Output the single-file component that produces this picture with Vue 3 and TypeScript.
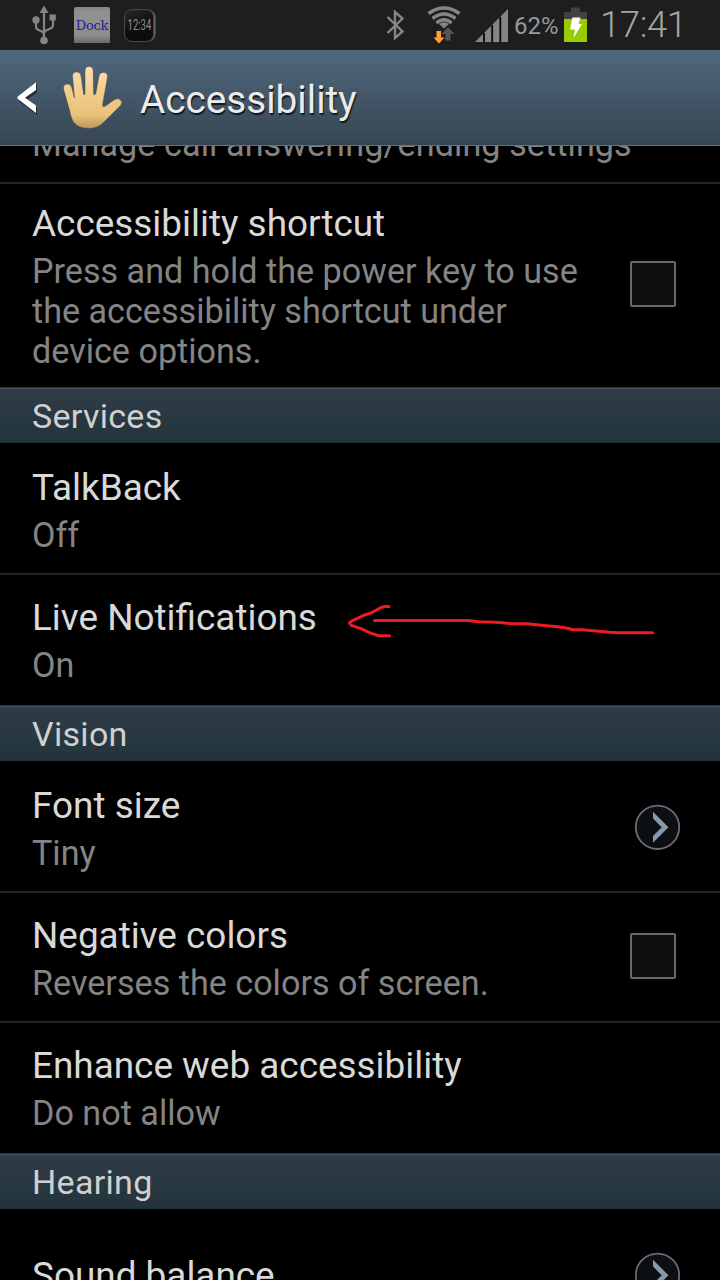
<script setup lang="ts">
interface Item {
  title: string
  summary?: string
  control?: 'check' | 'more'
  tall?: boolean
  arrow?: boolean
}
interface Section {
  heading: string
  items: Item[]
}

const sections: Section[] = [
  {
    heading: '',
    items: [
      {
        title: 'Accessibility shortcut',
        summary: 'Press and hold the power key to use\nthe accessibility shortcut under\ndevice options.',
        control: 'check',
        tall: true,
      },
    ],
  },
  {
    heading: 'Services',
    items: [
      { title: 'TalkBack', summary: 'Off' },
      { title: 'Live Notifications', summary: 'On', arrow: true },
    ],
  },
  {
    heading: 'Vision',
    items: [
      { title: 'Font size', summary: 'Tiny', control: 'more' },
      { title: 'Negative colors', summary: 'Reverses the colors of screen.', control: 'check' },
      { title: 'Enhance web accessibility', summary: 'Do not allow' },
    ],
  },
  {
    heading: 'Hearing',
    items: [{ title: 'Sound balance', control: 'more' }],
  },
]
</script>

<template>
  <div class="screen">
    <header class="status">
      <div class="notices">
        <svg class="usb" width="26" height="40" viewBox="0 0 26 40">
          <g fill="none" stroke="#858585" stroke-width="2.2">
            <path d="M13 8V34M5 15V21.5Q5 24 7.500 25L11 26.500Q13 27.500 13 31M22 13V20Q22 22.500 19.500 23.500L15 25.500Q13 26.500 13 29" />
          </g>
          <g fill="#858585">
            <path d="M13 0.500L17.500 8H8.500Z" />
            <circle cx="5" cy="15" r="3.700" />
            <rect x="18.500" y="9.500" width="6.300" height="6" />
            <circle cx="13" cy="35.500" r="3.800" />
          </g>
        </svg>
        <div class="dock">Dock</div>
        <div class="watch"><span>12:34</span></div>
      </div>
      <div class="signals">
        <svg class="bluetooth" width="20" height="32" viewBox="0 0 20 32">
          <path d="M2.500 8L17.500 22.500L10 29V3L17.500 9.500L2.500 24" fill="none" stroke="#858585" stroke-width="2.400" />
        </svg>
        <svg class="wifi" width="34" height="38" viewBox="0 0 34 38">
          <g fill="none" stroke="#858585" stroke-width="3.500">
            <path d="M1.500 7.500Q17 -3.500 32.500 7.500" />
            <path d="M5.500 12.500Q17 3.500 28.500 12.500" />
            <path d="M9.500 17Q17 10.500 24.500 17" />
          </g>
          <path d="M12 18Q17 14.500 22 18L17 22.500Z" fill="#858585" />
          <path d="M9.500 25H14V31.500H17.500L12 37.500L6.500 31.500H9.500Z" fill="#ffa135" />
          <path d="M18.500 34.500H23.500V28H27.500L21 21L14.500 28H18.500Z" fill="#555" />
        </svg>
        <svg class="cell" width="34" height="34" viewBox="0 0 34 34">
          <path d="M0 33L33 0V33Z" fill="#858585" />
          <path d="M9 24V33M17.200 16V33M25.300 8V33" stroke="#080808" stroke-width="1.800" />
        </svg>
        <span class="percent">62%</span>
        <svg class="battery" width="23" height="36" viewBox="0 0 23 36">
          <path d="M7 0.500H16V5H23V13H0V5H7Z" fill="#424242" />
          <rect y="12" width="23" height="23" fill="#99cc00" />
          <path d="M8.300 10.500H16.500L14.500 17H18L9.500 31L11 22.500H6Z" fill="#fff" />
        </svg>
        <span class="clock">17:41</span>
      </div>
    </header>

    <nav class="titlebar">
      <svg class="back" width="22" height="34" viewBox="0 0 22 34">
        <path d="M19 2.500V10.500L8.500 18L19 25.500V33L0.800 19.500V16.500Z" fill="#151d24" transform="translate(1 1)" opacity=".7" />
        <path d="M19 1.300V9L8 16.800L19 24.500V32L0.500 17.800V15.800Z" fill="#fff" />
      </svg>
      <svg class="hand" width="62" height="66" viewBox="0 0 62 66">
        <defs>
          <linearGradient id="skin" x1="0" y1="0" x2="0" y2="1">
            <stop offset="0" stop-color="#ffdfad" />
            <stop offset=".45" stop-color="#f2cb88" />
            <stop offset=".78" stop-color="#e9c27b" />
            <stop offset="1" stop-color="#b89558" />
          </linearGradient>
        </defs>
        <path
          d="M12.500 33L10.500 11Q10.500 7 14.500 7T19 11L21.600 29Q22 31 23 29L23 6Q23 1.500 27 1.500T31.200 6L31.500 29Q32.500 31 33.800 28.500L37 11Q38 7 42 7.500T45.500 12L40.500 40Q41 43 43.500 41L52 35Q56 32.500 58.500 35T58.500 40.500L42 57Q36 63.500 27 63.500Q16 63.500 11.500 57Q9 53 7.500 45L1.800 25Q0.500 20 4.500 19Q8.500 18.500 9.500 22Z"
          fill="url(#skin)"
          stroke="#3c3e3d"
          stroke-opacity=".5"
          stroke-width=".8"
        />
      </svg>
      <h1>Accessibility</h1>
    </nav>

    <main class="list">
      <div class="clipped"><p>Manage call answering/ending settings</p></div>
      <section v-for="(section, s) in sections" :key="s">
        <h2 v-if="section.heading">{{ section.heading }}</h2>
        <ul :class="{ lined: !section.heading }">
          <li v-for="item in section.items" :key="item.title" :class="{ tall: item.tall, single: !item.summary }">
            <div class="words">
              <h3>{{ item.title }}</h3>
              <p v-if="item.summary">{{ item.summary }}</p>
            </div>
            <span v-if="item.control === 'check'" class="check"></span>
            <svg v-if="item.control === 'more'" class="more" width="46" height="46" viewBox="0 0 46 46">
              <circle cx="22.500" cy="23.300" r="21.700" fill="#0c0f11" stroke="#686d75" stroke-width="1.800" />
              <path d="M18 7.800L33.500 23.300L18 38.800V32L26.700 23.300L18 14.600Z" fill="#8698ad" />
            </svg>
            <svg v-if="item.arrow" class="arrow" width="310" height="36" viewBox="0 0 310 36">
              <g fill="none" stroke="#ed1c24" stroke-width="3" stroke-linecap="round" stroke-linejoin="round">
                <path d="M27.500 17.500H121L132 18.800L149 19.200L165 20.800H179L208 23.500L218 24.800L226 26.800H235L263 29.300L271 29.700H305.500" />
                <path d="M42 3.500H38L34 4.500L24 10L17 12.200L11 15.200L5 17.800L2.500 20L5 22.700L14 25.700L23 29.800L32 32.800H42.500" />
              </g>
            </svg>
          </li>
        </ul>
      </section>
    </main>
  </div>
</template>

<style>
body {
  margin: 0;
  background: #000;
}
</style>

<style scoped>
.screen {
  width: 720px;
  height: 1280px;
  overflow: hidden;
  display: flex;
  flex-direction: column;
  background: #000;
  font-family: Roboto, "Noto Sans", sans-serif;
}
h1, h2, h3, p, ul {
  margin: 0;
  padding: 0;
  font-weight: 400;
}
.status {
  height: 50px;
  flex: none;
  display: flex;
  justify-content: space-between;
  background: #1e1e1e;
  color: #999;
}
.notices, .signals {
  display: flex;
  align-items: flex-start;
}
.usb {
  margin: 5px 0 0 31px;
}
.dock {
  width: 36px;
  height: 36px;
  margin: 7px 0 0 17px;
  border-radius: 2px 2px 0 0;
  background: linear-gradient(#858585, #929292 15%, #8c8c8c 80%, #686868);
  color: #1e1e96;
  font: 13px/38px "DejaVu Serif", serif;
  letter-spacing: -0.2px;
  text-align: center;
  white-space: nowrap;
}
.watch {
  box-sizing: border-box;
  width: 30px;
  height: 33px;
  margin: 9px 0 0 14px;
  border: 1.5px solid #484848;
  border-radius: 8px;
  background: linear-gradient(155deg, #292929, #0c0c0c 60%);
  box-shadow: 2px 0 0 -0.5px #666;
  color: #8c8c8c;
  font-size: 14px;
  line-height: 30px;
  display: flex;
  justify-content: center;
}
.watch span {
  transform: scaleX(0.68);
}
.bluetooth {
  margin: 9px 0 0;
}
.wifi {
  margin: 6px 0 0 22px;
}
.cell {
  margin: 9px 0 0 14px;
}
.percent {
  width: 50px;
  margin-left: 5px;
  font-size: 24px;
  line-height: 52px;
}
.battery {
  margin: 7px 0 0;
}
.clock {
  width: 120px;
  margin-left: 13px;
  font-size: 36.5px;
  font-weight: 300;
  line-height: 49px;
  letter-spacing: -0.4px;
  color: #a6a6a6;
}
.titlebar {
  box-sizing: border-box;
  height: 96px;
  flex: none;
  display: flex;
  align-items: flex-start;
  background: linear-gradient(#50687e, #364552);
  border-bottom: 1px solid #617483;
}
.back {
  margin: 31px 0 0 17px;
}
.hand {
  margin: 15px 0 0 23px;
}
h1 {
  margin-left: 16px;
  font-size: 38.7px;
  line-height: 100px;
  color: #ebebeb;
  text-shadow: 1px 2px 1px #10181f;
}
.list {
  flex: 1;
  min-height: 0;
  overflow: hidden;
}
.clipped {
  height: 36px;
  overflow: hidden;
  padding-left: 32px;
}
.clipped p {
  margin-top: -22px;
  letter-spacing: 0.08px;
}
p {
  color: #848484;
  font-size: 34.15px;
  line-height: 40px;
  white-space: pre;
}
h2 {
  box-sizing: border-box;
  height: 56px;
  padding-left: 32px;
  border-top: 1px solid #29343b;
  box-shadow: inset 0 1px #455460;
  background: linear-gradient(#303c48, #22343b);
  color: #d0d0d0;
  font-size: 34px;
  line-height: 57px;
  letter-spacing: 0.3px;
}
ul {
  list-style: none;
  padding-bottom: 2px;
}
li {
  position: relative;
  box-sizing: border-box;
  height: 130px;
  padding: 22px 40px 0 32px;
  display: flex;
  justify-content: space-between;
}
li + li, .lined li {
  border-top: 2px solid #242424;
  padding-top: 20px;
}
.lined li.tall {
  height: 203px;
  padding-top: 16px;
}
h3 {
  margin-top: 1px;
  color: #d9d9d9;
  font-size: 36.9px;
  line-height: 44px;
  white-space: nowrap;
}
h3 + p {
  margin-top: 5px;
}
.tall h3 {
  margin-top: 2px;
}
.single h3 {
  margin-top: 23px;
}
.check {
  box-sizing: border-box;
  width: 46px;
  height: 46px;
  margin: 20px 4px 0 0;
  border: 2px solid #656970;
  border-radius: 2px;
  background: #0c0e10;
}
.tall .check {
  margin-top: 61px;
}
.more {
  margin: 21px -1px 0 0;
}
.arrow {
  position: absolute;
  left: 347px;
  top: 28px;
}
</style>
